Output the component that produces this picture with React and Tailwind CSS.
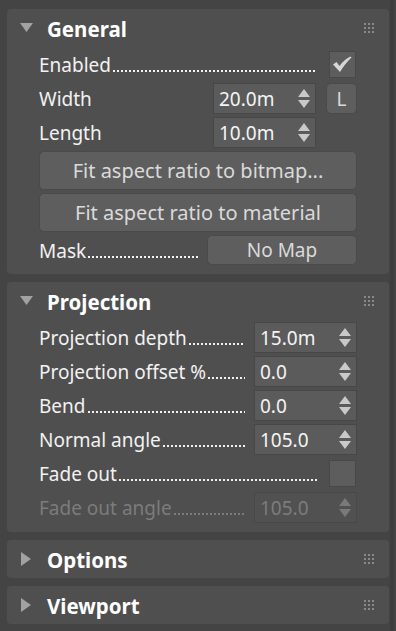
import React from 'react';

function Grip() {
  return (
    <div className="grid grid-cols-3 gap-[2px]">
      {Array.from({ length: 9 }).map((_, i) => (
        <span key={i} className="w-[2px] h-[2px] bg-[#8a8a8a]" />
      ))}
    </div>
  );
}

function Arrow({ open }) {
  return (
    <div className="w-[13px] flex items-center">
      {open ? (
        <svg width="13" height="9" viewBox="0 0 13 9">
          <polygon points="0,0 13,0 6.5,9" fill="#a2a2a2" />
        </svg>
      ) : (
        <svg width="11" height="14" viewBox="0 0 11 14" className="ml-[1px]">
          <polygon points="0,0 10,7 0,14" fill="#a2a2a2" />
        </svg>
      )}
    </div>
  );
}

function Panel({ title, open, children }) {
  return (
    <div className="rounded-[4px] bg-[#4f4f4f]">
      <div className={`flex items-center pl-[13px] pr-[15px] ${open ? 'h-[37px]' : 'h-[38px]'}`}>
        <Arrow open={open} />
        <span className="ml-[14px] pt-[3px] text-[20.5px] font-bold text-white flex-1">{title}</span>
        <Grip />
      </div>
      {open && <div className="flex flex-col gap-[3px] pt-[3px] pb-[9px] px-[32px]">{children}</div>}
    </div>
  );
}

// label followed by a dotted leader that runs up to the control
function Label({ text, dots, disabled }) {
  return (
    <div className={`flex-1 min-w-0 h-full flex items-center ${disabled ? 'text-[#7c7c7c]' : 'text-[#f2f2f2]'}`}>
      <span className="whitespace-nowrap leading-[26px] pt-[1px]">{text}</span>
      {dots && (
        <div
          className={`flex-1 self-start mt-[21px] ml-[2px] h-[2px] bg-repeat-x bg-[length:4px_2px] ${
            disabled
              ? 'bg-[linear-gradient(90deg,#7c7c7c_2px,transparent_2px)]'
              : 'bg-[linear-gradient(90deg,#f2f2f2_2px,transparent_2px)]'
          }`}
        />
      )}
    </div>
  );
}

function Spinner({ value, disabled }) {
  return (
    <div
      className={`w-[103px] h-[31px] flex items-center justify-between pl-[5px] pr-[5px] border ${
        disabled ? 'bg-[#515151] border-[#484848] text-[#7c7c7c]' : 'bg-[#5b5b5b] border-[#474747] text-[#f4f4f4]'
      }`}
    >
      <span className="pt-[1px]">{value}</span>
      <svg width="12" height="20" viewBox="0 0 12 20">
        <polygon points="6,0 12,8 0,8" fill={disabled ? '#7a7a7a' : '#c9c9c9'} />
        <polygon points="0,11 12,11 6,19" fill={disabled ? '#7a7a7a' : '#c9c9c9'} />
      </svg>
    </div>
  );
}

function Check({ checked }) {
  return (
    <div className="ml-[12px] mr-[1px] w-[27px] h-[27px] bg-[#5d5d5d] border border-[#484848] flex items-center justify-center">
      {checked && (
        <svg width="25" height="25" viewBox="0 0 25 25">
          <path d="M3 12.5 L6.5 10 L9.5 14 Q14 7.5 20.5 4.5 L21.5 5.5 Q15.5 11 10 20 Z" fill="#d6d6d6" />
        </svg>
      )}
    </div>
  );
}

function Button({ children, className = '' }) {
  return (
    <div
      className={`flex items-center justify-center pt-[1px] rounded-[5px] bg-[#5e5e5e] border border-[#4a4a4a] text-[#dadada] ${className}`}
    >
      {children}
    </div>
  );
}

function Row({ children }) {
  return <div className="flex items-center h-[31px]">{children}</div>;
}

export default function App() {
  return (
    <div className="w-[396px] h-[631px] bg-[#444444] flex font-['Noto_Sans',sans-serif] text-[19px] leading-none overflow-hidden">
      <div className="w-[389px] pl-[7px] pt-[9px] flex flex-col gap-[8px]">
        <Panel title="General" open>
          <Row>
            <Label text="Enabled" dots />
            <Check checked />
          </Row>
          <Row>
            <Label text="Width" />
            <Spinner value="20.0m" />
            <Button className="ml-[10px] w-[31px] h-[31px] text-[19px]">L</Button>
          </Row>
          <Row>
            <Label text="Length" />
            <Spinner value="10.0m" />
            <div className="w-[41px]" />
          </Row>
          <Button className="h-[39px] text-[20px]">Fit aspect ratio to bitmap...</Button>
          <Button className="h-[39px] text-[20px]">Fit aspect ratio to material</Button>
          <div className="flex items-center h-[30px]">
            <Label text="Mask" dots />
            <Button className="ml-[9px] w-[150px] h-[30px]">No Map</Button>
          </div>
        </Panel>

        <Panel title="Projection" open>
          <Row>
            <Label text="Projection depth" dots />
            <div className="ml-[9px]"><Spinner value="15.0m" /></div>
          </Row>
          <Row>
            <Label text="Projection offset %" dots />
            <div className="ml-[9px]"><Spinner value="0.0" /></div>
          </Row>
          <Row>
            <Label text="Bend" dots />
            <div className="ml-[9px]"><Spinner value="0.0" /></div>
          </Row>
          <Row>
            <Label text="Normal angle" dots />
            <div className="ml-[9px]"><Spinner value="105.0" /></div>
          </Row>
          <Row>
            <Label text="Fade out" dots />
            <Check />
          </Row>
          <Row>
            <Label text="Fade out angle" dots disabled />
            <div className="ml-[9px]"><Spinner value="105.0" disabled /></div>
          </Row>
        </Panel>

        <Panel title="Options" />
        <Panel title="Viewport" />
      </div>
      <div className="ml-[1px] w-[4px] h-full bg-[#3e3e3e]" />
    </div>
  );
}
